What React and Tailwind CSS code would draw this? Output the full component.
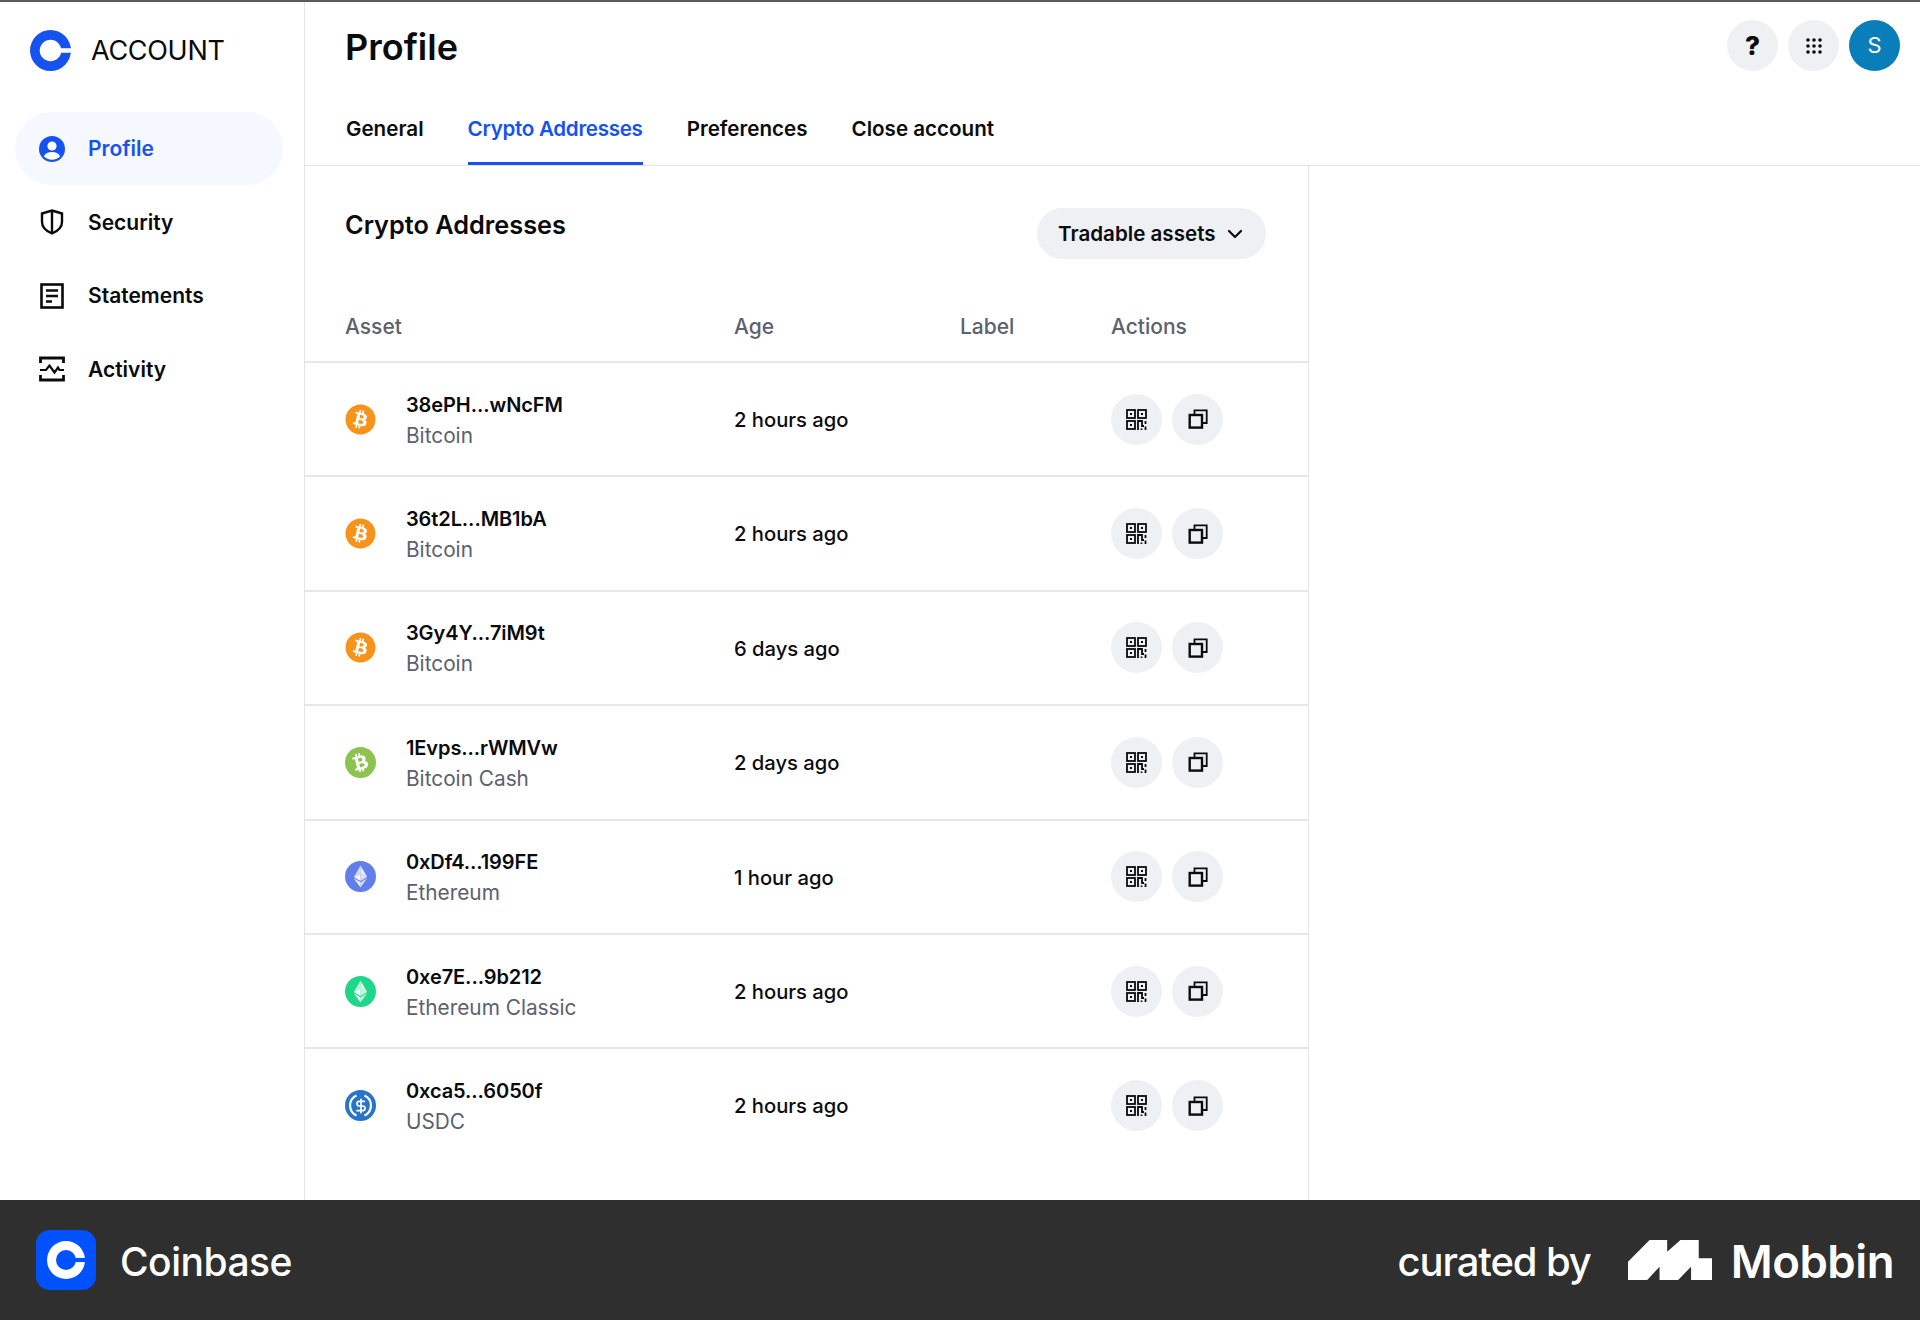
import React from 'react';
import { ChevronDown, DollarSign } from 'lucide-react';
import { FaBitcoin, FaBtc } from 'react-icons/fa';

const CoinbaseMark = ({ className, ring, cut }) => (
  <svg className={className} viewBox="0 0 40 40">
    <circle cx="20" cy="20" r="20" fill={ring} />
    <circle cx="20" cy="20" r="10.5" fill={cut} />
    <rect x="20" y="17.8" width="20" height="4.4" fill={cut} />
  </svg>
);

const ProfileIcon = () => (
  <svg className="w-[26px] h-[26px]" viewBox="0 0 26 26">
    <circle cx="13" cy="13" r="13" fill="#1652f0" />
    <circle cx="13" cy="10" r="4.6" fill="white" />
    <path d="M4.8 20.2c1.4-2.8 4.4-4.3 8.2-4.3s6.8 1.5 8.2 4.3c-2 2.2-5 3.6-8.2 3.6s-6.200-1.400-8.200-3.600z" fill="white" />
  </svg>
);

const ShieldIcon = () => (
  <svg className="w-[26px] h-[26px]" viewBox="0 0 26 26" fill="none" stroke="#0a0b0d" strokeWidth="2.4">
    <path d="M13 1.500 23 4.500V13c0 5.500-4 9-10 11.500C7 22 3 18.500 3 13V4.500z" />
    <path d="M13 2v22" />
  </svg>
);

const StatementIcon = () => (
  <svg className="w-[26px] h-[26px]" viewBox="0 0 26 26" fill="none" stroke="#0a0b0d" strokeWidth="2.600">
    <rect x="2.500" y="1.500" width="21" height="23" />
    <path d="M7 7.500h12M7 13h12M7 18.500h6" />
  </svg>
);

const ActivityIcon = () => (
  <svg className="w-[26px] h-[26px]" viewBox="0 0 26 26" fill="none" stroke="#0a0b0d" strokeWidth="2.800">
    <path d="M1.500 7V2h23v5M1.500 19v5h23v-5" />
    <path d="M1 14h6l3.500-4.500 5 7L19 11.500l1.500 2.500H25" strokeWidth="2.200" />
  </svg>
);

const QrIcon = () => (
  <svg className="w-[21px] h-[21px]" viewBox="0 0 21 21" fill="none" stroke="#0a0b0d" strokeWidth="1.800">
    <rect x="1" y="1" width="8" height="8" />
    <rect x="12" y="1" width="8" height="8" />
    <rect x="1" y="12" width="8" height="8" />
    <path d="M12 21v-9h4v5h2" />
    <path d="M19.500 12v3M19.500 17.500V21M15.500 19.500V21" />
    <rect x="4" y="4" width="2" height="2" fill="#0a0b0d" stroke="none" />
    <rect x="15" y="4" width="2" height="2" fill="#0a0b0d" stroke="none" />
    <rect x="4" y="15" width="2" height="2" fill="#0a0b0d" stroke="none" />
  </svg>
);

const CopyIcon = () => (
  <svg className="w-[20px] h-[20px]" viewBox="0 0 20 20" fill="none" stroke="#0a0b0d" strokeWidth="2.400">
    <rect x="1.700" y="6" width="12.300" height="12.600" />
    <path d="M6.500 5.500V1.300h12.200V14h-4.500" strokeWidth="1.800" />
  </svg>
);

const DotsIcon = () => (
  <svg className="w-4 h-4" viewBox="0 0 16 16" fill="#0a0b0d">
    {[2, 8, 14].map((y) =>
      [2, 8, 14].map((x) => <circle key={`${x}-${y}`} cx={x} cy={y} r="1.800" />)
    )}
  </svg>
);

const BtcIcon = () => <FaBitcoin className="w-[31px] h-[31px] text-[#f7931a]" />;

const BchIcon = () => (
  <div className="w-[31px] h-[31px] rounded-full bg-[#8dc351] flex items-center justify-center">
    <FaBtc className="w-[19px] h-[19px] text-white -rotate-[14deg]" />
  </div>
);

const EthIcon = ({ bg }) => (
  <svg className="w-[31px] h-[31px]" viewBox="0 0 31 31">
    <circle cx="15.500" cy="15.500" r="15.500" fill={bg} />
    <polygon points="15.500,4.500 15.500,13 8.800,16" fill="white" fillOpacity="0.7" />
    <polygon points="15.500,4.500 22.200,16 15.500,13" fill="white" fillOpacity="0.85" />
    <polygon points="8.800,16 15.500,13 15.500,20" fill="white" fillOpacity="0.95" />
    <polygon points="22.200,16 15.500,13 15.500,20" fill="white" fillOpacity="0.75" />
    <polygon points="8.800,17.300 15.500,21.300 15.500,26.500" fill="white" fillOpacity="0.9" />
    <polygon points="22.200,17.300 15.500,21.300 15.500,26.500" fill="white" fillOpacity="0.7" />
  </svg>
);

const UsdcIcon = () => (
  <div className="relative w-[31px] h-[31px] rounded-full bg-[#2775ca] flex items-center justify-center">
    <svg className="absolute inset-0" viewBox="0 0 31 31" fill="none" stroke="white" strokeWidth="2.200">
      <path d="M11.500 5.500a11 11 0 0 0 0 20M19.500 5.500a11 11 0 0 1 0 20" />
    </svg>
    <DollarSign className="w-[16px] h-[16px] text-white" strokeWidth={2.6} />
  </div>
);

const navItems = [
  { label: 'Profile', icon: <ProfileIcon />, active: true },
  { label: 'Security', icon: <ShieldIcon /> },
  { label: 'Statements', icon: <StatementIcon /> },
  { label: 'Activity', icon: <ActivityIcon /> },
];

const rows = [
  { address: '38ePH...wNcFM', name: 'Bitcoin', age: '2 hours ago', icon: <BtcIcon /> },
  { address: '36t2L...MB1bA', name: 'Bitcoin', age: '2 hours ago', icon: <BtcIcon /> },
  { address: '3Gy4Y...7iM9t', name: 'Bitcoin', age: '6 days ago', icon: <BtcIcon /> },
  { address: '1Evps...rWMVw', name: 'Bitcoin Cash', age: '2 days ago', icon: <BchIcon /> },
  { address: '0xDf4...199FE', name: 'Ethereum', age: '1 hour ago', icon: <EthIcon bg="#627eea" /> },
  { address: '0xe7E...9b212', name: 'Ethereum Classic', age: '2 hours ago', icon: <EthIcon bg="#1fd68a" /> },
  { address: '0xca5...6050f', name: 'USDC', age: '2 hours ago', icon: <UsdcIcon /> },
];

const tabs = ['General', 'Crypto Addresses', 'Preferences', 'Close account'];

const App = () => {
  return (
    <div className="w-[1920px] h-[1320px] flex flex-col bg-white text-[#0a0b0d] font-['Inter',sans-serif]">
      <div className="h-[1200px] flex border-t-2 border-[#5b5b5b]">
        {/* Sidebar */}
        <aside className="w-[305px] shrink-0 border-r border-[#e3e4e7]">
          <div className="flex items-center h-[96px] pl-[30px] gap-[20px]">
            <CoinbaseMark className="w-[41px] h-[41px]" ring="#1652f0" cut="white" />
            <span className="text-[27px] tracking-[-0.3px] pt-[2px]">ACCOUNT</span>
          </div>
          <nav className="mt-[14px] pl-[15px] flex flex-col gap-[0.5px]">
            {navItems.map((item) => (
              <div
                key={item.label}
                className={`w-[268px] h-[73px] rounded-full flex items-center pl-[24px] gap-[23px] ${item.active ? 'bg-[#f5f8ff] text-[#1652f0]' : ''}`}
              >
                {item.icon}
                <span className="text-[21px] font-semibold pt-[1px]">{item.label}</span>
              </div>
            ))}
          </nav>
        </aside>

        <main className="flex-1 flex flex-col min-w-0">
          {/* Top header */}
          <header className="h-[164px] shrink-0 border-b border-[#e3e4e7] pl-[40px] pr-[20px] flex flex-col">
            <div className="flex justify-between pt-[18px]">
              <h1 className="text-[36px] leading-[50px] font-semibold mt-[2px]">Profile</h1>
              <div className="flex gap-[10px]">
                <div className="w-[51px] h-[51px] rounded-full bg-[#eef0f3] flex items-center justify-center text-[26px] font-extrabold">?</div>
                <div className="w-[51px] h-[51px] rounded-full bg-[#eef0f3] flex items-center justify-center">
                  <DotsIcon />
                </div>
                <div className="w-[51px] h-[51px] rounded-full bg-[#0a7eb8] flex items-center justify-center text-[22px] text-white">S</div>
              </div>
            </div>
            <div className="flex gap-[44px] mt-auto pl-[1px]">
              {tabs.map((tab) => (
                <div
                  key={tab}
                  className={`h-[57px] pt-[6px] text-[20.6px] font-semibold border-b-[3px] ${tab === 'Crypto Addresses' ? 'text-[#1652f0] border-[#1652f0] tracking-[-0.3px]' : 'border-transparent'}`}
                >
                  {tab}
                </div>
              ))}
            </div>
          </header>

          <div className="flex-1 flex min-h-0">
            {/* Addresses table */}
            <section className="w-[1004px] shrink-0 border-r border-[#e3e4e7]">
              <div className="h-[115px] flex justify-between items-start pl-[40px] pr-[42px] pt-[42px]">
                <h2 className="text-[25.3px] leading-[34px] font-semibold">Crypto Addresses</h2>
                <button className="h-[51px] w-[229px] rounded-full bg-[#eef0f3] flex items-center justify-between pl-[21px] pr-[19px] text-[20.6px] font-semibold">
                  <span className="pt-[2px]">Tradable assets</span>
                  <ChevronDown className="w-[24px] h-[24px]" strokeWidth={2.2} />
                </button>
              </div>
              <div className="h-[82px] pt-[11px] grid grid-cols-[389px_226px_151px_1fr] items-center pl-[40px] text-[21px] font-medium text-[#5b616e] border-b-2 border-[#e6e7ea]">
                <span>Asset</span>
                <span>Age</span>
                <span>Label</span>
                <span>Actions</span>
              </div>
              {rows.map((row, i) => (
                <div
                  key={row.address}
                  className={`h-[114.4px] grid grid-cols-[389px_226px_151px_1fr] items-center pl-[40px] border-b-2 ${i < rows.length - 1 ? 'border-[#e6e7ea]' : 'border-transparent'}`}
                >
                  <div className="flex items-center gap-[30px]">
                    {row.icon}
                    <div className="flex flex-col gap-[1px] pt-[2px]">
                      <span className="text-[20px] leading-[30px] font-semibold tracking-[-0.1px]">{row.address}</span>
                      <span className="text-[20.8px] leading-[30px] text-[#5b616e]">{row.name}</span>
                    </div>
                  </div>
                  <span className="text-[20.2px] font-medium pt-[2px]">{row.age}</span>
                  <span />
                  <div className="flex gap-[10px]">
                    <button className="w-[51px] h-[51px] rounded-full bg-[#eef0f3] flex items-center justify-center">
                      <QrIcon />
                    </button>
                    <button className="w-[51px] h-[51px] rounded-full bg-[#eef0f3] flex items-center justify-center">
                      <CopyIcon />
                    </button>
                  </div>
                </div>
              ))}
            </section>
            <div className="flex-1" />
          </div>
        </main>
      </div>

      {/* Footer */}
      <footer className="h-[120px] bg-[#2f2f2f] flex items-center justify-between pl-[36px] pr-[26px] text-white">
        <div className="flex items-center gap-[24px]">
          <div className="w-[60px] h-[60px] rounded-[14px] bg-[#0052ff] flex items-center justify-center">
            <CoinbaseMark className="w-[38px] h-[38px]" ring="white" cut="#0052ff" />
          </div>
          <span className="text-[39px] font-medium tracking-[-0.5px] pt-[4px]">Coinbase</span>
        </div>
        <div className="flex items-center">
          <span className="text-[40px] font-medium tracking-[-1.1px] pt-[3px]">curated by</span>
          <svg className="w-[84px] h-[40px] ml-[37px] mr-[19px]" viewBox="0 0 253 120" fill="white">
            <polygon points="0,120 0,65 65,0 118,0 118,35 158,0 213,0 213,55 253,55 253,120 190,120 190,80 151,120 95,120 95,80 58,120" />
          </svg>
          <span className="text-[45.5px] font-semibold tracking-[-0.5px] pt-[4px]">Mobbin</span>
        </div>
      </footer>
    </div>
  );
};

export default App;
